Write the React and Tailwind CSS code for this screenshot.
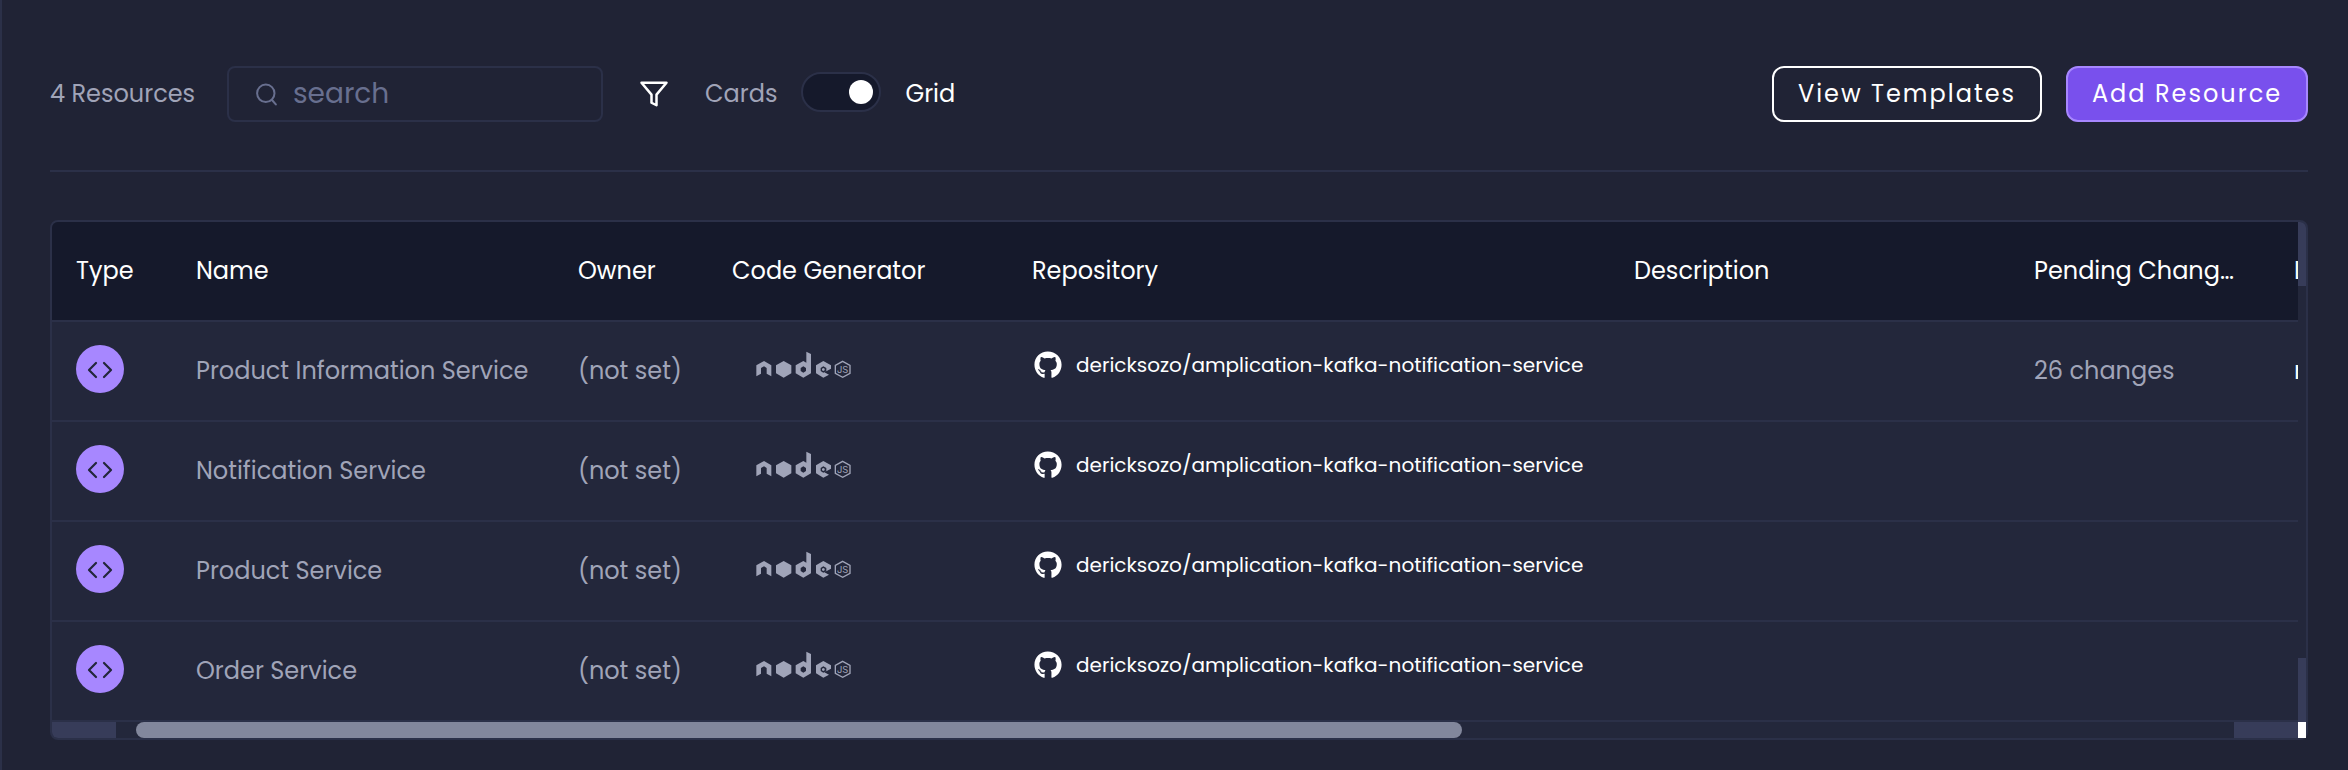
import React from "react";
import { FaGithub } from "react-icons/fa";

const resources = [
  { name: "Product Information Service", changes: "26 changes", build: "n/a" },
  { name: "Notification Service" },
  { name: "Product Service" },
  { name: "Order Service" },
];

function SearchIcon() {
  return (
    <svg className="size-6" viewBox="0 0 24 24" fill="none" stroke="currentColor" strokeWidth="2" strokeLinecap="round" aria-hidden="true">
      <circle cx="12.8" cy="11.3" r="8.7" />
      <path d="M19 18 L22.8 22.4" />
    </svg>
  );
}

function FilterIcon() {
  return (
    <svg className="size-[30px]" viewBox="0 0 24 24" fill="none" stroke="currentColor" strokeWidth="2" strokeLinecap="round" strokeLinejoin="round" aria-hidden="true">
      <polygon points="22 3 2 3 10 12.46 10 19 14 21 14 12.46 22 3" />
    </svg>
  );
}

function TypeIcon() {
  return (
    <span className="flex size-12 items-center justify-center rounded-full bg-[#a787ff] text-[#23273b]">
      <svg className="size-7" viewBox="0 0 28 28" fill="none" stroke="currentColor" strokeWidth="2.2" strokeLinecap="round" strokeLinejoin="round" aria-hidden="true">
        <path d="M10 8 L3 15 L10 22" />
        <path d="M18 8 L25 15 L18 22" />
      </svg>
    </span>
  );
}

function NodeLogo() {
  return (
    <svg className="h-7 w-24" viewBox="0 0 288 84" fill="#a0a4b8" role="img" aria-label="Node">
      <path d="M1 76 V43 L24 30 L46 43 V76 L32 68 V51 L24 46 L15 51 V68 Z" />
      <path d="M83 30 L106 43 V67 L83 80 L60 67 V43 Z" />
      <path fillRule="evenodd" d="M151 2 L165 9 V67 L142 80 L119 67 V43 L142 30 L151 35 Z M142 46 L134 51 V60 L142 65 L150 60 V51 Z" />
      <path fillRule="evenodd" d="M202 30 L225 43 V53 L205 64 L219 71 L202 80 L180 67 V43 Z M202 46 L194 51 V60 L202 65 L211 60 V51 Z" />
      <path d="M202 51 L206 53 V58 L202 60 L198 58 V53 Z" />
      <path d="M260 31 L282 43 V67 L260 79 L238 67 V43 Z" fill="none" stroke="#a0a4b8" strokeWidth="4" />
      <text x="260" y="65" textAnchor="middle" fontSize="28" fontFamily="Inter, sans-serif">JS</text>
    </svg>
  );
}

function HeadCell({ children, width }) {
  return (
    <th scope="col" className={`${width} truncate border-b-2 border-[#2b3048] px-6 text-left font-normal`}>
      {children}
    </th>
  );
}

function Cell({ children }) {
  return <td className="truncate border-b-2 border-[#2b3048] px-6">{children}</td>;
}

export default function App() {
  return (
    <main className="min-h-screen border-l-2 border-[#2b3048] bg-[#202335] pt-[66px] pr-10 pb-6 pl-12 font-[Poppins,Inter,sans-serif] text-2xl text-white">
      <header className="flex items-center justify-between border-b-2 border-[#2b3048] pb-12">
        <div className="flex items-center">
          <span className="w-[177px] whitespace-nowrap text-[#a0a4b8]">4 Resources</span>
          <label className="flex h-14 w-[376px] items-center gap-4 rounded-lg border-2 border-[#2b3048] px-6 text-[#686f8f]">
            <SearchIcon />
            <input
              type="text"
              aria-label="Search"
              placeholder="search"
              className="min-w-0 flex-1 bg-transparent text-[28px] outline-none placeholder:text-[#686f8f]"
            />
          </label>
          <button type="button" aria-label="Filter" className="mx-9">
            <FilterIcon />
          </button>
          <label className="flex items-center gap-6">
            <span className="text-[#a0a4b8]">Cards</span>
            <input
              type="checkbox"
              role="switch"
              defaultChecked
              className="mb-1 flex h-10 w-20 appearance-none items-center rounded-full border-2 border-[#2b3048] bg-[#15192b] px-1.5 before:size-6 before:rounded-full before:bg-white checked:justify-end"
            />
            <span>Grid</span>
          </label>
        </div>
        <div className="flex gap-6">
          <button type="button" className="h-14 w-[270px] rounded-xl border-2 border-white tracking-[2px]">View Templates</button>
          <button type="button" className="h-14 w-[242px] rounded-xl border-2 border-[#a787ff] bg-[#7950ed] tracking-[2px]">Add Resource</button>
        </div>
      </header>

      <section className="mt-12 rounded-lg border-2 border-[#2b3048] bg-[#23273b]">
        <div className="flex overflow-hidden rounded-t-md">
          <div className="min-w-0 flex-1 overflow-hidden">
            <table className="w-[2518px] table-fixed border-separate border-spacing-0">
              <thead className="bg-[#15192b]">
                <tr className="h-[100px]">
                  <HeadCell width="w-[120px]">Type</HeadCell>
                  <HeadCell width="w-[382px]">Name</HeadCell>
                  <HeadCell width="w-[154px]">Owner</HeadCell>
                  <HeadCell width="w-[300px]">Code Generator</HeadCell>
                  <HeadCell width="w-[602px]">Repository</HeadCell>
                  <HeadCell width="w-[400px]">Description</HeadCell>
                  <HeadCell width="w-[260px]">Pending Changes</HeadCell>
                  <HeadCell width="w-[300px]">Last Build</HeadCell>
                </tr>
              </thead>
              <tbody className="text-[#a0a4b8]">
                {resources.map((r) => (
                  <tr key={r.name} className="h-[100px]">
                    <Cell><div className="pb-1"><TypeIcon /></div></Cell>
                    <Cell>{r.name}</Cell>
                    <Cell>(not set)</Cell>
                    <Cell><div className="px-6 pb-3"><NodeLogo /></div></Cell>
                    <Cell>
                      <a href="#repository" className="flex items-center gap-3.5 px-0.5 pb-3 text-xl text-white">
                        <FaGithub className="size-7" />
                        dericksozo/amplication-kafka-notification-service
                      </a>
                    </Cell>
                    <Cell />
                    <Cell>{r.changes}</Cell>
                    <Cell><span className="text-white">{r.build}</span></Cell>
                  </tr>
                ))}
              </tbody>
            </table>
          </div>
          <div className="flex w-2 flex-col justify-between" aria-hidden="true">
            <div className="h-16 bg-[#373c59]" />
            <div className="h-16 bg-[#373c59]" />
          </div>
        </div>
        <div className="flex h-4" aria-hidden="true">
          <div className="w-16 rounded-bl-md bg-[#373c59]" />
          <div className="flex-1 pl-5">
            <div className="h-4 w-[63.2%] rounded-full bg-[#82879c]" />
          </div>
          <div className="w-16 bg-[#373c59]" />
          <div className="w-2 bg-white" />
        </div>
      </section>
    </main>
  );
}
